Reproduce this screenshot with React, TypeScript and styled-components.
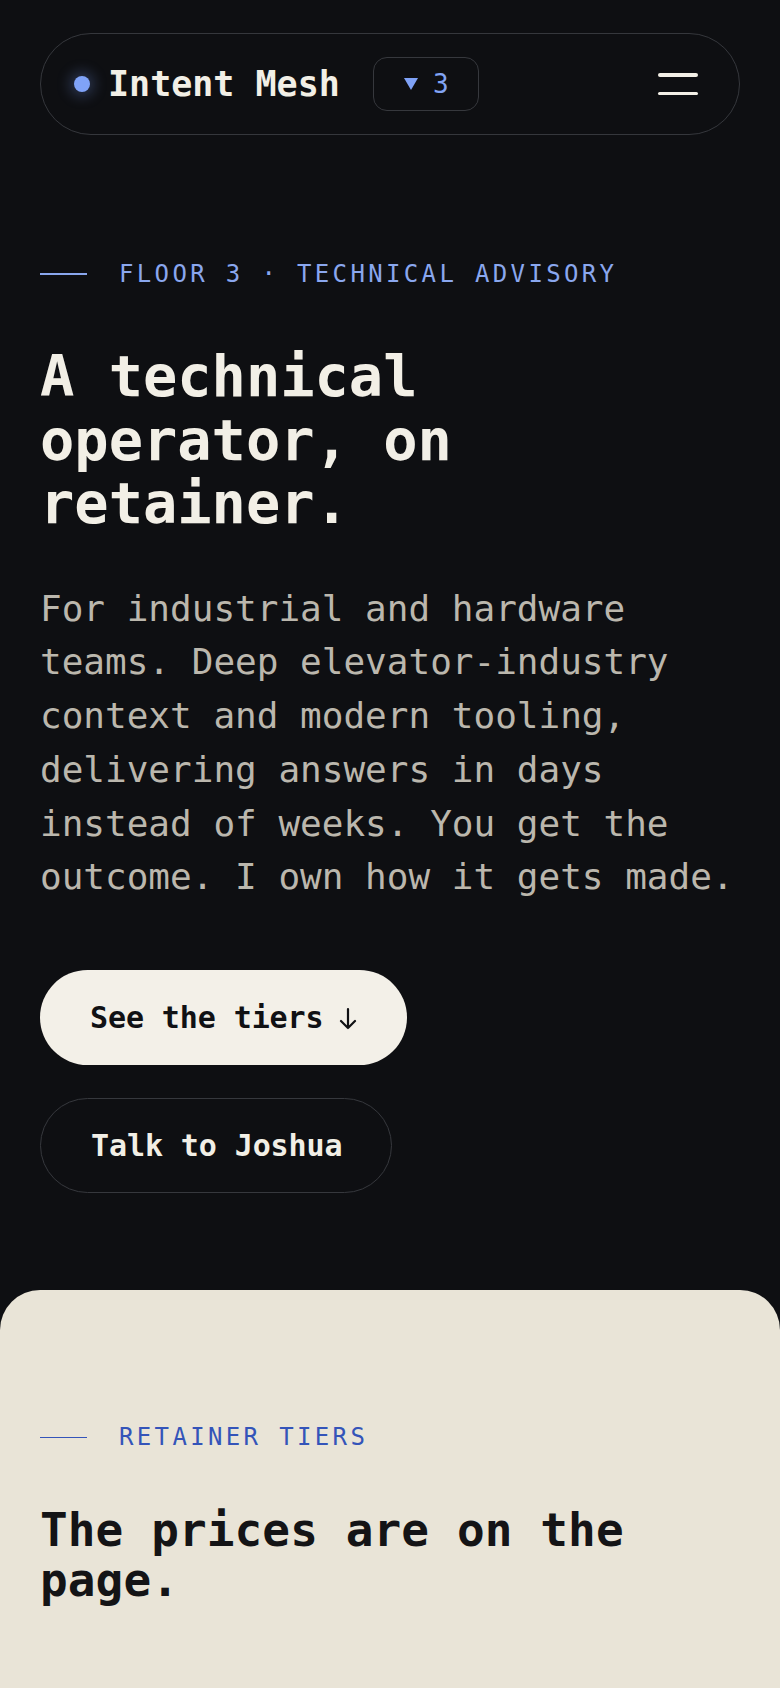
import React from "react";
import styled, { createGlobalStyle } from "styled-components";

const GlobalStyle = createGlobalStyle`
  * { box-sizing: border-box; }
  html, body { margin: 0; padding: 0; }
  body {
    background: #0e0f12;
    font-family: "DejaVu Sans Mono", "Liberation Mono", monospace;
    -webkit-font-smoothing: antialiased;
  }
`;

const Page = styled.div`
  min-height: 1688px;
  display: flex;
  flex-direction: column;
  background: #0e0f12;
`;

const Hero = styled.section`
  padding: 33px 40px 97px;
  display: flex;
  flex-direction: column;
`;

const Nav = styled.nav`
  height: 102px;
  border: 1.5px solid #35373c;
  border-radius: 999px;
  display: flex;
  align-items: center;
  padding: 0 41px 0 33px;
`;

const Brand = styled.div`
  display: flex;
  align-items: center;
  gap: 18px;
`;

const Dot = styled.span`
  width: 16px;
  height: 16px;
  border-radius: 50%;
  background: #80a3f8;
  box-shadow: 0 0 14px 4px rgba(127, 162, 247, 0.28);
`;

const BrandName = styled.span`
  font-weight: 700;
  font-size: 35px;
  line-height: 1;
  color: #f2efe6;
`;

const FloorBadge = styled.div`
  margin-left: 33px;
  height: 54px;
  width: 106px;
  border: 1.5px solid #36383d;
  border-radius: 14px;
  display: flex;
  align-items: center;
  justify-content: center;
  gap: 14px;
  color: #82a4f4;
  font-size: 26px;
`;

const Tri = styled.svg`
  width: 16px;
  height: 14px;
  display: block;
`;

const MenuButton = styled.button`
  margin-left: auto;
  background: none;
  border: none;
  padding: 0;
  width: 40px;
  height: 30px;
  display: flex;
  flex-direction: column;
  justify-content: center;
  gap: 15px;
  cursor: pointer;
`;

const MenuLine = styled.span`
  display: block;
  height: 3.5px;
  width: 40px;
  border-radius: 2px;
  background: #f2efe6;
`;

const Eyebrow = styled.div<{ $tone: "light" | "dark"; $top: number }>`
  margin-top: ${(p) => p.$top}px;
  display: flex;
  align-items: center;
  gap: 32px;
  height: 30px;
  color: ${(p) => (p.$tone === "light" ? "#8aa7ee" : "#3454b9")};
  font-size: 24px;
  letter-spacing: 3.35px;
  text-transform: uppercase;
`;

const EyebrowRule = styled.span`
  width: 47px;
  height: 1.5px;
  background: currentColor;
  flex: none;
`;

const Title = styled.h1`
  margin: 56px 0 0;
  font-size: 57px;
  line-height: 63.5px;
  font-weight: 700;
  color: #f2efe6;
`;

const Lead = styled.p`
  margin: 46px 0 0;
  font-size: 36px;
  line-height: 53.8px;
  color: #bbb7ad;
`;

const Actions = styled.div`
  margin-top: 66px;
  display: flex;
  flex-direction: column;
  align-items: flex-start;
  gap: 33px;
`;

const Button = styled.a<{ $variant: "solid" | "ghost" }>`
  display: inline-flex;
  align-items: center;
  gap: 14px;
  height: 95px;
  padding: 0 49px 0 50px;
  border-radius: 999px;
  font-size: 30px;
  font-weight: 700;
  text-decoration: none;
  letter-spacing: -0.1px;
  background: ${(p) => (p.$variant === "solid" ? "#f3f0e8" : "transparent")};
  color: ${(p) => (p.$variant === "solid" ? "#101114" : "#f2efe6")};
  border: ${(p) => (p.$variant === "solid" ? "none" : "1.5px solid #36383d")};
`;

const ArrowIcon = styled.svg`
  width: 20px;
  height: 24px;
  display: block;
  margin-top: 2px;
`;

const Tiers = styled.section`
  flex: 1;
  background: #e9e4d7;
  border-radius: 40px 40px 0 0;
  padding: 0 40px 60px;
  display: flex;
  flex-direction: column;
`;

const TiersTitle = styled.h2`
  margin: 53px 0 0;
  font-size: 46px;
  line-height: 50px;
  font-weight: 700;
  color: #141416;
  letter-spacing: 0.1px;
`;

export default function App() {
  return (
    <>
      <GlobalStyle />
      <Page>
        <Hero>
          <Nav>
            <Brand>
              <Dot />
              <BrandName>Intent Mesh</BrandName>
            </Brand>
            <FloorBadge>
              <Tri viewBox="0 0 16 14">
                <path d="M1 1 H15 L8 13 Z" fill="#7fa2f7" />
              </Tri>
              <span>3</span>
            </FloorBadge>
            <MenuButton aria-label="Menu">
              <MenuLine />
              <MenuLine />
            </MenuButton>
          </Nav>

          <Eyebrow $tone="light" $top={124}>
            <EyebrowRule />
            <span>Floor 3 · Technical Advisory</span>
          </Eyebrow>

          <Title>A technical operator, on retainer.</Title>

          <Lead>
            For industrial and hardware teams. Deep elevator-industry context and
            modern tooling, delivering answers in days instead of weeks. You get
            the outcome. I own how it gets made.
          </Lead>

          <Actions>
            <Button $variant="solid" href="#tiers">
              <span>See the tiers</span>
              <ArrowIcon viewBox="0 0 20 24" aria-hidden="true">
                <path
                  d="M10 2 V21 M3 14 L10 21 L17 14"
                  fill="none"
                  stroke="#101114"
                  strokeWidth="2.2"
                  strokeLinecap="round"
                  strokeLinejoin="round"
                />
              </ArrowIcon>
            </Button>
            <Button $variant="ghost" href="#contact">
              Talk to Joshua
            </Button>
          </Actions>
        </Hero>

        <Tiers id="tiers">
          <Eyebrow $tone="dark" $top={132}>
            <EyebrowRule />
            <span>Retainer Tiers</span>
          </Eyebrow>
          <TiersTitle>The prices are on the page.</TiersTitle>
        </Tiers>
      </Page>
    </>
  );
}
